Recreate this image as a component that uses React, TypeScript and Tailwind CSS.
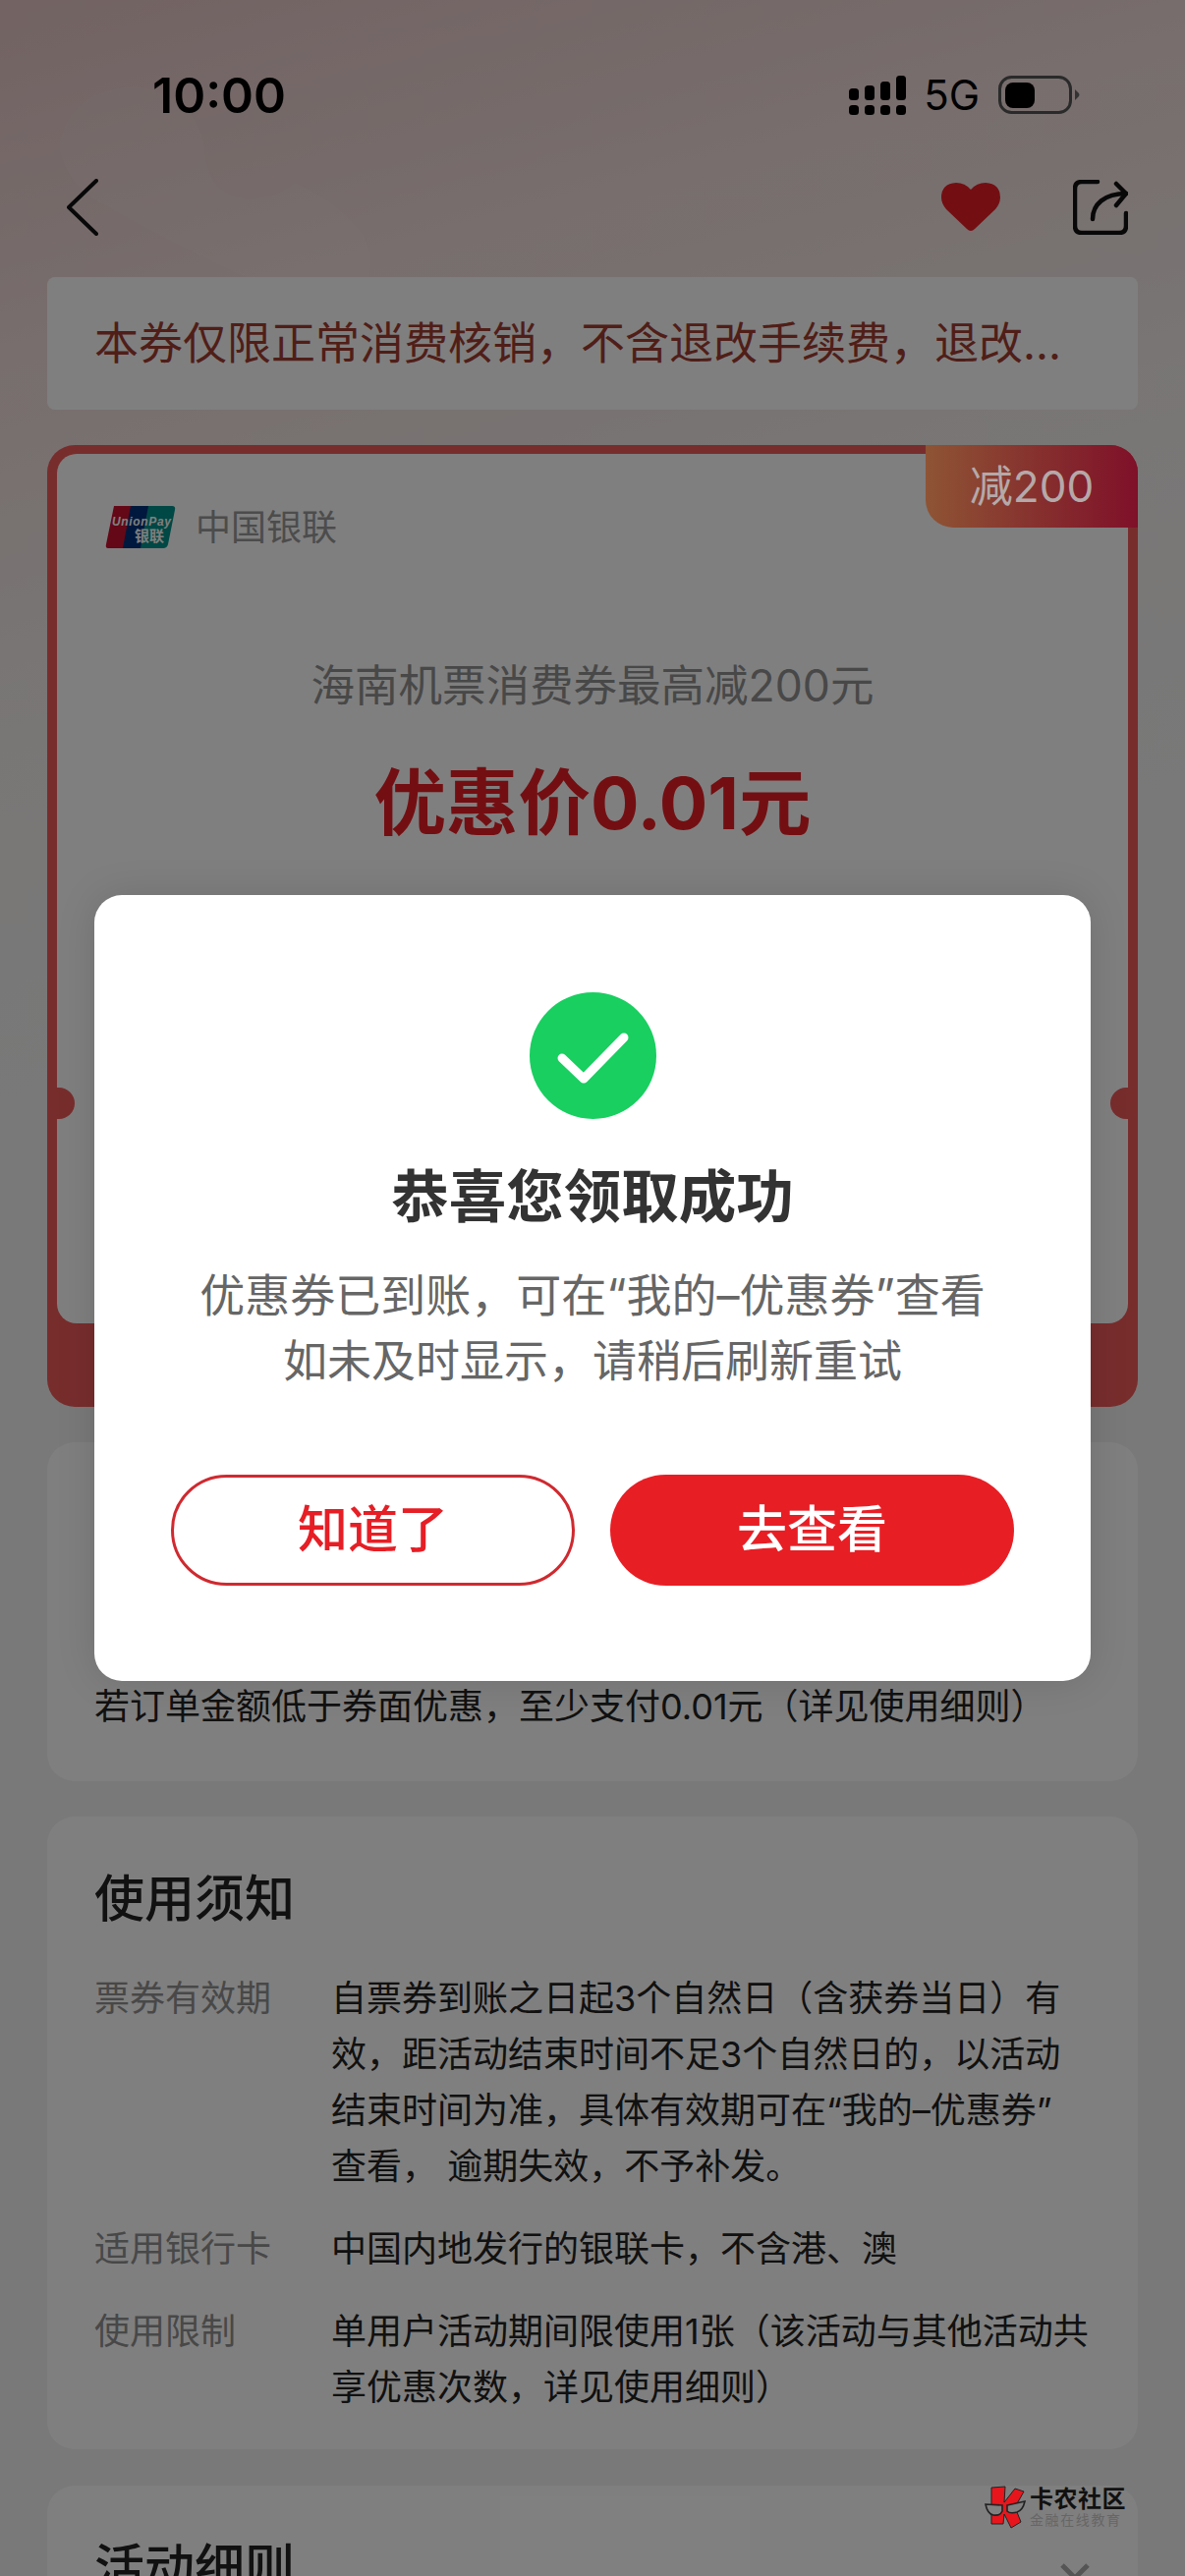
const cjk = { fontFamily: '"Inter", "Noto Sans CJK SC", sans-serif' }

const usage = [
  { label: '票券有效期', lines: ['自票券到账之日起3个自然日（含获券当日）有', '效，距活动结束时间不足3个自然日的，以活动', '结束时间为准，具体有效期可在“我的–优惠券”', '查看， 逾期失效，不予补发。'] },
  { label: '适用银行卡', lines: ['中国内地发行的银联卡，不含港、澳'] },
  { label: '使用限制', lines: ['单用户活动期间限使用1张（该活动与其他活动共', '享优惠次数，详见使用细则）'] },
]

function Signal() {
  return (
    <svg width="58" height="40" viewBox="0 0 58 40" fill="#000">
      <rect x="0" y="30" width="10" height="10" rx="3.5" />
      <rect x="16" y="30" width="10" height="10" rx="3.5" />
      <rect x="32" y="30" width="10" height="10" rx="3.5" />
      <rect x="48" y="30" width="10" height="10" rx="3.5" />
      <rect x="0" y="13" width="10" height="12" rx="3.5" />
      <rect x="16" y="10" width="10" height="15" rx="3.5" />
      <rect x="32" y="6" width="10" height="19" rx="3.5" />
      <rect x="48" y="0" width="10" height="25" rx="3.5" />
    </svg>
  )
}

function Battery() {
  return (
    <svg width="84" height="40" viewBox="0 0 84 40">
      <rect x="1.5" y="1.5" width="72" height="36" rx="12" fill="none" stroke="#555" strokeWidth="3" />
      <rect x="7" y="7" width="30" height="26" rx="8" fill="#000" />
      <path d="M78 14 L82 18 Q83 19.5 82 21 L78 25 Z" fill="#666" />
    </svg>
  )
}

function UnionPay() {
  return (
    <svg width="72" height="45" viewBox="0 0 72 45">
      <path d="M9 1 H32 L24 44 H3 Q0 44 1 40 Z" fill="#c8102e" />
      <path d="M26 1 H50 L42 44 H18 Z" fill="#00307a" />
      <path d="M44 1 H68 Q72 1 71 5 L64 40 Q63 44 59 44 H36 Z" fill="#00908a" />
      <text x="7" y="21" fontSize="12" fontWeight="700" fontStyle="italic" fill="#fff" fontFamily="Liberation Sans, sans-serif" textLength="60">UnionPay</text>
      <text x="30" y="37" fontSize="15" fontWeight="700" fill="#fff" fontFamily="Noto Sans CJK SC, sans-serif">银联</text>
    </svg>
  )
}

function WatermarkLogo() {
  return (
    <svg width="42" height="44" viewBox="0 0 42 44">
      <path d="M7 2 L21 1 L20 17 L31 3 L40 6 L31 22 L37 37 L27 43 L20 29 L19 39 L7 39 Z" fill="#e8161c" stroke="#222" strokeWidth="1" />
      <path d="M1 19 L18 20 L18 26 Q16 31 9 30 Q3 29 1 19 Z" fill="#808080" stroke="#222" strokeWidth="1.6" />
      <path d="M23 20 L41 16 Q39 25 33 27 Q26 29 23 26 Z" fill="#808080" stroke="#222" strokeWidth="1.6" />
    </svg>
  )
}

export default function App() {
  return (
    <div style={cjk} className="relative h-[2622px] w-[1206px] overflow-hidden bg-[linear-gradient(165deg,#e6c6c6_0%,#efdcda_12%,#f2efed_26%,#f2f2f2_38%)] pt-[70px]">
      {/* faint decoration behind the top bar */}
      <svg className="absolute left-0 top-0" width="500" height="282" viewBox="0 0 500 282">
        <path d="M60 150 Q70 90 140 88 Q200 100 208 150 Q210 200 255 203 Q285 200 300 186 Q370 220 378 262 L376 282 H250 Q160 240 100 205 Q70 190 60 150 Z" fill="#fff" fillOpacity="0.07" />
      </svg>

      {/* status bar */}
      <div className="relative flex h-[54px] items-center justify-between pl-[155px] pr-[106px]">
        <span className="text-[50px] font-semibold leading-none text-black">10:00</span>
        <div className="flex items-center">
          <Signal />
          <span className="ml-[18px] mr-[19px] text-[42px] leading-none text-black">5G</span>
          <Battery />
        </div>
      </div>

      {/* nav */}
      <div className="relative mt-[42px] flex h-[90px] items-center justify-between pl-[68px] pr-[58px]">
        <svg width="32" height="58" viewBox="0 0 32 58" fill="none" stroke="#111" strokeWidth="4" strokeLinecap="round" strokeLinejoin="round">
          <path d="M30 2 L2 29 L30 56" />
        </svg>
        <div className="flex items-center gap-[74px]">
          <svg width="60" height="50" viewBox="0 0 60 50" fill="#e61e25">
            <path d="M30 49 Q28 49 26 47 L5 27 Q0 21 0 15 Q0 1 15 0 Q24 0 30 7 Q36 0 45 0 Q60 1 60 15 Q60 21 55 27 L34 47 Q32 49 30 49 Z" />
          </svg>
          <svg width="56" height="56" viewBox="0 0 56 56" fill="none" stroke="#111" strokeWidth="4.5" strokeLinecap="round" strokeLinejoin="round">
            <path d="M25 2 H9 Q2 2 2 9 V47 Q2 54 9 54 H47 Q54 54 54 47 V34" />
            <path d="M20 40 C20 25 32 14 54 14" />
            <path d="M44 4 L54 14 L44 26" />
          </svg>
        </div>
      </div>

      {/* notice */}
      <div className="relative mx-[48px] mt-[26px] flex h-[135px] items-center rounded-[8px] bg-white px-[48px]">
        <p className="whitespace-nowrap text-[45px] leading-none text-[#a03c30]">本券仅限正常消费核销，不含退改手续费，退改...</p>
      </div>

      {/* ticket */}
      <div className="relative mx-[48px] mt-[36px] h-[979px] rounded-[28px] bg-[#f05a5a] px-[10px] pt-[9px]">
        <div className="flex h-[885px] flex-col items-center rounded-[20px] bg-white">
          <div className="mt-[52px] flex w-full items-center pl-[49px]">
            <UnionPay />
            <span className="ml-[20px] text-[36px] leading-none text-[#999]">中国银联</span>
          </div>
          <p className="mt-[109px] text-[44.5px] leading-[60px] text-[#909090]">海南机票消费券最高减200元</p>
          <p className="mt-[45px] text-[73.5px] font-bold leading-[90px] text-[#e61e25]">优惠价0.01元</p>
        </div>
        <div className="absolute right-0 top-0 z-20 flex h-[84px] w-[216px] items-center justify-center rounded-bl-[28px] rounded-tr-[28px] bg-[linear-gradient(90deg,#8e5434,#7f1029)] text-[44px] leading-none text-[#b5a9a9]">
          减200
        </div>
        <div className="absolute left-0 top-[654px] h-[32px] w-[28px] rounded-r-full bg-[#f05a5a]" />
        <div className="absolute right-0 top-[654px] h-[32px] w-[28px] rounded-l-full bg-[#f05a5a]" />
      </div>

      {/* price note, the rest of it sits under the modal */}
      <div className="mx-[48px] mt-[36px] flex h-[345px] flex-col justify-end rounded-[28px] bg-white px-[48px] pb-[47px]">
        <p className="text-[36px] leading-[57px] text-[#222]">若订单金额低于券面优惠，至少支付0.01元（详见使用细则）</p>
      </div>

      {/* usage */}
      <div className="mx-[48px] mt-[36px] h-[644px] rounded-[28px] bg-white px-[48px] pt-[54px]">
        <h2 className="text-[51px] font-medium leading-[60px] text-[#222]">使用须知</h2>
        <div className="mt-[43px] flex flex-col gap-[27px]">
          {usage.map((row) => (
            <div key={row.label} className="flex text-[36px] leading-[57px]">
              <span className="w-[241px] shrink-0 text-[#909090]">{row.label}</span>
              <div className="whitespace-nowrap text-[#222]">
                {row.lines.map((line) => (
                  <div key={line}>{line}</div>
                ))}
              </div>
            </div>
          ))}
        </div>
      </div>

      {/* rules, cut off by the screen */}
      <div className="mx-[48px] mt-[37px] flex h-[200px] items-start justify-between rounded-[28px] bg-white px-[48px] pt-[54px]">
        <h2 className="text-[51px] font-medium leading-[60px] text-[#222]">活动细则</h2>
        <svg className="mt-[24px]" width="32" height="20" viewBox="0 0 32 20" fill="none" stroke="#aaa" strokeWidth="5">
          <path d="M3 3 L16 16 L29 3" />
        </svg>
      </div>

      {/* dim + modal */}
      <div className="absolute inset-0 z-10 flex items-center justify-center bg-black/50">
        <div className="flex h-[800px] w-[1014px] flex-col items-center rounded-[28px] bg-white pt-[99px] shadow-[0_0_40px_rgba(0,0,0,0.12)]">
          <svg width="129" height="129" viewBox="0 0 129 129">
            <circle cx="64.5" cy="64.5" r="64.5" fill="#18cf60" />
            <path d="M33 67 L55 88 L96 46" fill="none" stroke="#fff" strokeWidth="9" strokeLinecap="round" strokeLinejoin="round" />
          </svg>
          <h1 className="mt-[44px] text-[58.5px] font-bold leading-[70px] text-[#333]">恭喜您领取成功</h1>
          <div className="mt-[31px] text-center leading-[68px] text-[#666]">
            <p className="text-[46px]">优惠券已到账，可在“我的–优惠券”查看</p>
            <p className="text-[45px]">如未及时显示，请稍后刷新重试</p>
          </div>
          <div className="mt-[81px] flex gap-[36px]">
            <button className="h-[113px] w-[411px] rounded-full border-[3px] border-[#cf2a30] text-[51px] font-medium text-[#e61e25]">知道了</button>
            <button className="h-[113px] w-[411px] rounded-full bg-[#e81e25] text-[51px] font-medium text-white">去查看</button>
          </div>
        </div>
      </div>

      {/* watermark */}
      <div className="absolute bottom-[48px] right-[60px] z-20 flex items-center gap-[4px]">
        <WatermarkLogo />
        <div className="flex flex-col">
          <span className="text-[24px] font-bold leading-[26px] tracking-[0.5px] text-[#111]">卡农社区</span>
          <span className="text-[14px] leading-[16px] tracking-[1.6px] text-[#666]">金融在线教育</span>
        </div>
      </div>
    </div>
  )
}
